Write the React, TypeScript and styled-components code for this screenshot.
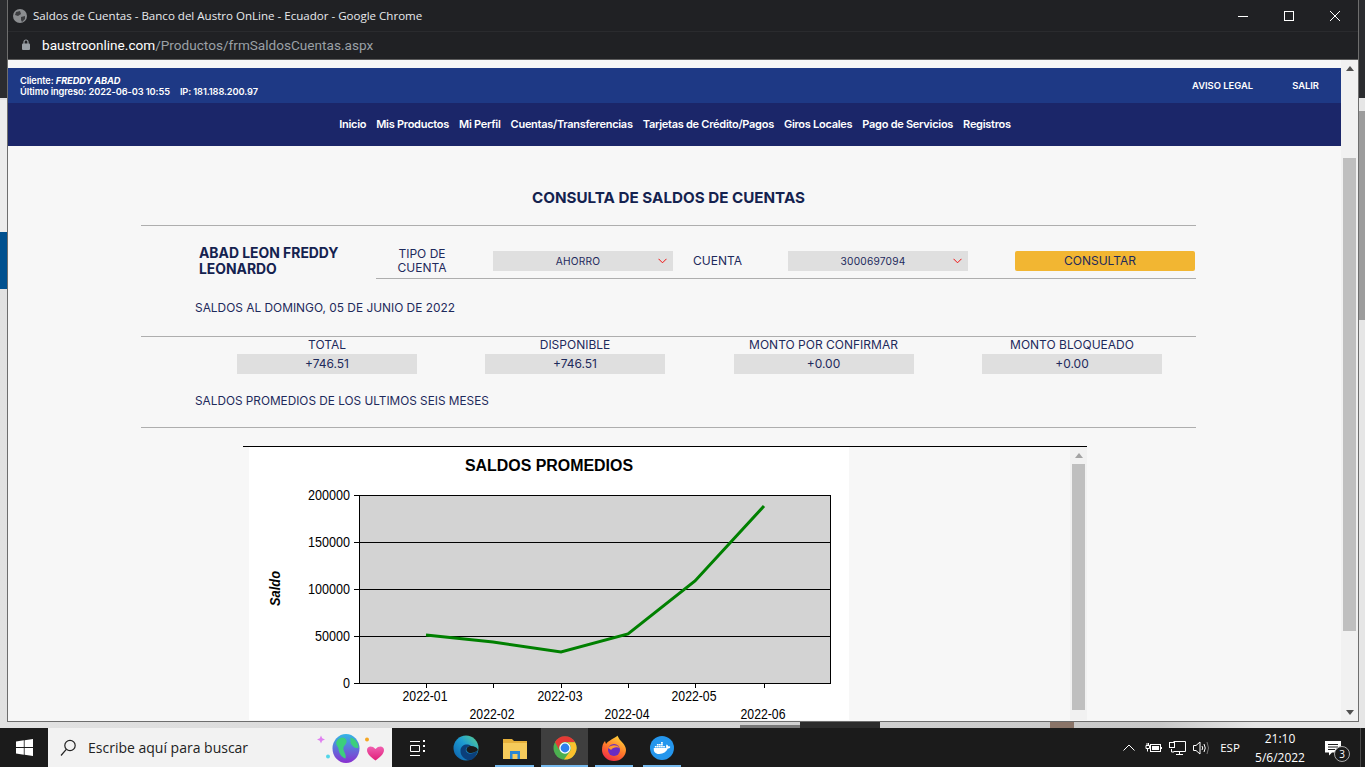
import React from "react";
import styled, { createGlobalStyle } from "styled-components";
import { FaDocker } from "react-icons/fa";

const GlobalStyle = createGlobalStyle`
  html, body { margin: 0; padding: 0; width: 1365px; height: 767px; overflow: hidden; }
  * { box-sizing: border-box; }
`;

const Desktop = styled.div`
  width: 1365px;
  height: 767px;
  display: flex;
  flex-direction: column;
  font-family: Inter, "Liberation Sans", sans-serif;
  background-color: #dcdcdc;
  background-image:
    linear-gradient(#2b2c2f, #2b2c2f),
    linear-gradient(#2b2c2f, #2b2c2f),
    linear-gradient(#00508f, #00508f),
    linear-gradient(#ececec, #ececec),
    linear-gradient(#9c9c9c, #9c9c9c),
    linear-gradient(#8a7468, #8a7468),
    linear-gradient(#2c2c2c, #2c2c2c),
    linear-gradient(#777777, #777777),
    linear-gradient(90deg, #e2e2e2, #d4d4d4 50%, #c8c8c8 85%, #e6e6e6 92%);
  background-size: 8px 98px, 8px 98px, 8px 57px, 8px 132px, 7px 209px, 24px 8px, 80px 6px, 60px 3px, 100% 100%;
  background-position: 0 0, 1358px 0, 0 232px, 0 100px, 1358px 111px, 1050px 720px, 800px 722px, 740px 725px, 0 0;
  background-repeat: no-repeat;
`;

const DesktopArea = styled.div`
  flex: 1;
  min-height: 0;
  padding: 0 7px 7px 8px;
  display: flex;
`;

const Window = styled.div`
  flex: 1;
  min-width: 0;
  display: flex;
  flex-direction: column;
  box-shadow: 0 0 0 1px #6e6e6e;
`;

const TitleBar = styled.div`
  height: 31px;
  background: #202124;
  display: flex;
  align-items: center;
  padding-left: 5px;
  color: #e8eaed;
  font-family: "Open Sans", sans-serif;
  font-size: 11.55px;
`;

const TitleText = styled.span`
  margin-left: 6px;
  flex: 1;
  white-space: nowrap;
`;

const WindowButton = styled.div`
  width: 46px;
  height: 31px;
  display: flex;
  align-items: center;
  justify-content: center;
`;

const AddressBar = styled.div`
  height: 29px;
  background: #202124;
  border-top: 1px solid #2a2b2e;
  border-bottom: 1px solid #5c5c5c;
  display: flex;
  align-items: center;
  padding: 0 0 2px 14px;
  font-family: Roboto, sans-serif;
  font-size: 13.6px;
  color: #9aa0a6;
`;

const Host = styled.span`
  color: #ffffff;
  margin-left: 12px;
`;

const Viewport = styled.div`
  flex: 1;
  min-height: 0;
  display: flex;
`;

const Page = styled.main`
  flex: 1;
  min-width: 0;
  overflow: hidden;
  background: #f7f7f7;
  padding-top: 8px;
  color: #1e2a5c;
`;

const InfoBar = styled.div`
  height: 35px;
  background: #1e3985;
  color: #fff;
  display: flex;
  align-items: center;
  padding-left: 12px;
  font-size: 9.25px;
  font-weight: 600;
  line-height: 11px;
`;

const ClientInfo = styled.div`
  flex: 1;
  letter-spacing: -0.1px;
  b { font-style: italic; font-weight: 700; }
`;

const IpLabel = styled.span`
  margin-left: 10px;
`;

const InfoLink = styled.a`
  font-size: 9.4px;
  font-weight: 600;
  margin-right: ${(p: { $gap: number }) => p.$gap}px;
`;

const NavBar = styled.nav`
  height: 43px;
  background: #1b2669;
  display: flex;
  justify-content: center;
  align-items: center;
  gap: 10px;
  padding-left: 1px;
  padding-bottom: 2px;
`;

const NavItem = styled.a`
  color: #fff;
  font-size: 11px;
  font-weight: 600;
  letter-spacing: -0.27px;
  white-space: nowrap;
`;

const Content = styled.div`
  width: 1055px;
  margin-left: 133px;
`;

const Heading = styled.h1`
  margin: 0;
  padding-top: 42px;
  height: 80px;
  border-bottom: 1px solid #aeaeae;
  text-align: center;
  font-size: 15.2px;
  line-height: 20px;
  font-weight: 700;
  color: #14224f;
`;

const QueryRow = styled.div`
  display: flex;
`;

const ClientName = styled.div`
  width: 235px;
  padding: 19px 0 0 58px;
  font-size: 13.9px;
  line-height: 16px;
  font-weight: 700;
  color: #14224f;
`;

const Fields = styled.div`
  flex: 1;
  display: flex;
  align-items: center;
  height: 53px;
  padding-top: 21px;
  padding-bottom: 3px;
  border-bottom: 1px solid #aeaeae;
`;

const FieldLabel = styled.div<{ $width: number; $gap: number; $center?: boolean }>`
  width: ${(p) => p.$width}px;
  margin-right: ${(p) => p.$gap}px;
  font-size: 12px;
  line-height: 14px;
  text-align: ${(p) => (p.$center ? "center" : "left")};
`;

const SelectBox = styled.div`
  width: 180px;
  height: 20px;
  background: #dfdfdf;
  display: flex;
  align-items: center;
  justify-content: center;
  position: relative;
  font-size: 10.2px;
  letter-spacing: 0.2px;
  padding-right: 10px;
`;

const Chevron = styled.svg`
  position: absolute;
  right: 6px;
  top: 7px;
`;

const FieldGap = styled.div<{ $w: number }>`
  width: ${(p) => p.$w}px;
`;

const ConsultButton = styled.button`
  width: 180px;
  height: 20px;
  border: 0;
  border-radius: 2px;
  background: #f2b632;
  color: #1e2a5c;
  font-family: inherit;
  font-size: 12px;
  padding: 0 10px 1px 0;
`;

const SectionText = styled.div`
  padding: 19px 0 18px 54px;
  font-size: 11.9px;
  line-height: 20px;
  height: 58px;
  border-bottom: 1px solid #aeaeae;
`;

const Balances = styled.div`
  display: grid;
  grid-template-columns: 248px 248px 249px 248px;
  padding-left: 62px;
`;

const BalanceCell = styled.div`
  display: flex;
  flex-direction: column;
  align-items: center;
`;

const BalanceLabel = styled.div`
  height: 17px;
  line-height: 16px;
  font-size: 12px;
  white-space: nowrap;
`;

const BalanceValue = styled.div`
  width: 180px;
  height: 20px;
  line-height: 20px;
  background: #dfdfdf;
  text-align: center;
  font-size: 12px;
`;

const AverageText = styled(SectionText)`
  height: 54px;
  padding: 17px 0 16px 54px;
  font-size: 11.8px;
`;

const ChartFrame = styled.div`
  width: 844px;
  height: 274px;
  margin: 18px 0 0 102px;
  border-top: 1px solid #000;
  display: flex;
  overflow: hidden;
`;

const ChartArea = styled.div`
  flex: 1;
  padding-left: 6px;
`;

const ChartSvg = styled.svg`
  display: block;
`;

const Scroll = styled.div`
  width: 17px;
  flex: none;
  background: #f1f1f1;
  display: flex;
  flex-direction: column;
  align-items: center;
`;

const ArrowBox = styled.div`
  height: 17px;
  flex: none;
  display: flex;
  align-items: center;
  justify-content: center;
`;

const ArrowUp = styled.div<{ $c: string }>`
  width: 0;
  height: 0;
  border-left: 4.5px solid transparent;
  border-right: 4.5px solid transparent;
  border-bottom: 5px solid ${(p) => p.$c};
`;

const ArrowDown = styled.div<{ $c: string }>`
  width: 0;
  height: 0;
  border-left: 4.5px solid transparent;
  border-right: 4.5px solid transparent;
  border-top: 5px solid ${(p) => p.$c};
`;

const Thumb = styled.div<{ $top: number; $h: number }>`
  width: 13px;
  height: ${(p) => p.$h}px;
  margin-top: ${(p) => p.$top}px;
  background: #bfbfbf;
  flex: none;
`;

const ScrollEnd = styled(ArrowBox)`
  margin-top: auto;
`;

const Taskbar = styled.footer`
  height: 39px;
  flex: none;
  background: #1b1b1b;
  display: flex;
  align-items: stretch;
  color: #fff;
  font-family: "Open Sans", sans-serif;
`;

const StartButton = styled.div`
  width: 48px;
  display: flex;
  align-items: center;
  justify-content: center;
`;

const SearchBox = styled.div`
  width: 344px;
  background: #f2f2f2;
  display: flex;
  align-items: center;
  padding-left: 12px;
  color: #222;
  font-size: 14px;
`;

const SearchText = styled.span`
  margin-left: 12px;
  flex: 1;
`;

const TaskButton = styled.div<{ $w?: number; $active?: boolean; $open?: boolean }>`
  width: ${(p) => p.$w ?? 49}px;
  display: flex;
  align-items: center;
  justify-content: center;
  position: relative;
  background: ${(p) => (p.$active ? "#3f3f3f" : "transparent")};
  &::after {
    content: "";
    display: ${(p) => (p.$open ? "block" : "none")};
    position: absolute;
    left: ${(p) => (p.$active ? 0 : 5)}px;
    right: ${(p) => (p.$active ? 0 : 5)}px;
    bottom: 0;
    height: 2px;
    background: #76b9ed;
  }
`;

const TaskSep = styled.div`
  width: 2px;
`;

const Tray = styled.div`
  margin-left: auto;
  display: flex;
  align-items: stretch;
`;

const TrayIcon = styled.div`
  width: 24px;
  display: flex;
  align-items: center;
  justify-content: center;
`;

const Lang = styled.div`
  width: 34px;
  display: flex;
  align-items: center;
  justify-content: center;
  font-size: 11.5px;
`;

const Clock = styled.div`
  width: 66px;
  display: flex;
  flex-direction: column;
  justify-content: center;
  align-items: center;
  font-size: 12px;
  line-height: 19px;
`;

const Notify = styled.div`
  width: 40px;
  display: flex;
  align-items: center;
  justify-content: center;
  position: relative;
`;

const NotifyBadge = styled.span`
  position: absolute;
  left: 21px;
  top: 18px;
  width: 16px;
  height: 16px;
  border-radius: 50%;
  border: 1px solid #aaa;
  background: #1b1b1b;
  font-size: 10px;
  line-height: 14px;
  text-align: center;
`;

const ShowDesktop = styled.div`
  width: 12px;
  padding-left: 7px;
  &::after {
    content: "";
    display: block;
    width: 1px;
    height: 100%;
    background: #4a4a4a;
  }
`;

const navItems = ["Inicio", "Mis Productos", "Mi Perfil", "Cuentas/Transferencias", "Tarjetas de Crédito/Pagos", "Giros Locales", "Pago de Servicios", "Registros"];
const balances = [
  ["TOTAL", "+746.51"],
  ["DISPONIBLE", "+746.51"],
  ["MONTO POR CONFIRMAR", "+0.00"],
  ["MONTO BLOQUEADO", "+0.00"],
];

const RedChevron = () => (
  <Chevron width="9" height="6" viewBox="0 0 9 6">
    <path d="M0.5 0.8 L4.5 4.8 L8.5 0.8" fill="none" stroke="#f01010" strokeWidth="1" />
  </Chevron>
);

const Chart = () => {
  const ys: [number, string][] = [[495, "200000"], [542, "150000"], [589, "100000"], [636, "50000"], [683, "0"]];
  const xs: [number, string, number][] = [[426, "2022-01", 700.5], [493, "2022-02", 719], [561, "2022-03", 700.5], [628, "2022-04", 719], [695, "2022-05", 700.5], [764, "2022-06", 719]];
  return (
    <ChartSvg width="600" height="273" viewBox="249 447 600 273">
      <rect x="249" y="447" width="600" height="273" fill="#fff" />
      <text x="549" y="471" textAnchor="middle" fontFamily="Liberation Sans" fontSize="16" fontWeight="700" fill="#000" textLength="168" lengthAdjust="spacingAndGlyphs">SALDOS PROMEDIOS</text>
      <rect x="359.5" y="495.5" width="471" height="188" fill="#d3d3d3" stroke="#000" />
      {ys.map(([y, l]) => (
        <g key={l}>
          <line x1="354" x2={y === 495 || y === 683 ? 360 : 831} y1={y + 0.5} y2={y + 0.5} stroke="#000" />
          <text x="350" y={y + 5} textAnchor="end" fontFamily="Liberation Sans" fontSize="14" fill="#000" textLength={l.length * 7} lengthAdjust="spacingAndGlyphs">{l}</text>
        </g>
      ))}
      {xs.map(([x, l, ty]) => (
        <g key={l}>
          <line x1={x + 0.5} x2={x + 0.5} y1="684" y2="688" stroke="#000" />
          <text x={x - 1} y={ty} textAnchor="middle" fontFamily="Liberation Sans" fontSize="14" fill="#000" textLength="45" lengthAdjust="spacingAndGlyphs">{l}</text>
        </g>
      ))}
      <polyline points="426,635 493,642 561,652 628,634 695,581 764,506" fill="none" stroke="#008000" strokeWidth="3" />
      <text transform="translate(279.5 588.500) rotate(-90)" textAnchor="middle" fontFamily="Liberation Sans" fontSize="14" fontWeight="700" fontStyle="italic" fill="#000" textLength="35" lengthAdjust="spacingAndGlyphs">Saldo</text>
    </ChartSvg>
  );
};

export default function App() {
  return (
    <Desktop>
      <GlobalStyle />
      <DesktopArea>
        <Window>
          <TitleBar>
            <svg width="14" height="14" viewBox="0 0 14 14">
              <circle cx="7" cy="7" r="7" fill="#8b8d90" />
              <path d="M3 3 L7 2 L8 5 L5 7 L2 6 Z M8 8 L12 7 L12 10 L9 13 L8 11 Z" fill="#3c3d40" />
            </svg>
            <TitleText>Saldos de Cuentas - Banco del Austro OnLine - Ecuador - Google Chrome</TitleText>
            <WindowButton>
              <svg width="12" height="12" viewBox="0 0 12 12"><path d="M1 6.5 H11" stroke="#fff" /></svg>
            </WindowButton>
            <WindowButton>
              <svg width="12" height="12" viewBox="0 0 12 12"><rect x="1.5" y="1.5" width="9" height="9" fill="none" stroke="#fff" /></svg>
            </WindowButton>
            <WindowButton>
              <svg width="12" height="12" viewBox="0 0 12 12"><path d="M1 1 L11 11 M11 1 L1 11" stroke="#fff" /></svg>
            </WindowButton>
          </TitleBar>
          <AddressBar>
            <svg width="8" height="11" viewBox="0 0 8 11">
              <path d="M2 5 V3 a2 2 0 0 1 4 0 V5" fill="none" stroke="#9aa0a6" strokeWidth="1.2" />
              <rect x="0" y="4.5" width="8" height="6.5" rx="1" fill="#9aa0a6" />
            </svg>
            <Host>baustroonline.com</Host>
            <span>/Productos/frmSaldosCuentas.aspx</span>
          </AddressBar>
          <Viewport>
            <Page>
              <InfoBar>
                <ClientInfo>
                  Cliente: <b>FREDDY ABAD</b>
                  <br />
                  Último ingreso: 2022-06-03 10:55<IpLabel>IP: 181.188.200.97</IpLabel>
                </ClientInfo>
                <InfoLink $gap={39}>AVISO LEGAL</InfoLink>
                <InfoLink $gap={22}>SALIR</InfoLink>
              </InfoBar>
              <NavBar>
                {navItems.map((n) => (
                  <NavItem key={n}>{n}</NavItem>
                ))}
              </NavBar>
              <Content>
                <Heading>CONSULTA DE SALDOS DE CUENTAS</Heading>
                <QueryRow>
                  <ClientName>
                    ABAD LEON FREDDY
                    <br />
                    LEONARDO
                  </ClientName>
                  <Fields>
                    <FieldLabel $width={92} $gap={25} $center>
                      TIPO DE
                      <br />
                      CUENTA
                    </FieldLabel>
                    <SelectBox>
                      AHORRO
                      <RedChevron />
                    </SelectBox>
                    <FieldGap $w={20} />
                    <FieldLabel $width={95} $gap={0}>CUENTA</FieldLabel>
                    <SelectBox>
                      3000697094
                      <RedChevron />
                    </SelectBox>
                    <FieldGap $w={47} />
                    <ConsultButton>CONSULTAR</ConsultButton>
                  </Fields>
                </QueryRow>
                <SectionText>SALDOS AL DOMINGO, 05 DE JUNIO DE 2022</SectionText>
                <Balances>
                  {balances.map(([l, v]) => (
                    <BalanceCell key={l}>
                      <BalanceLabel>{l}</BalanceLabel>
                      <BalanceValue>{v}</BalanceValue>
                    </BalanceCell>
                  ))}
                </Balances>
                <AverageText>SALDOS PROMEDIOS DE LOS ULTIMOS SEIS MESES</AverageText>
                <ChartFrame>
                  <ChartArea>
                    <Chart />
                  </ChartArea>
                  <Scroll>
                    <ArrowBox><ArrowUp $c="#a3a3a3" /></ArrowBox>
                    <Thumb $top={0} $h={246} />
                  </Scroll>
                </ChartFrame>
              </Content>
            </Page>
            <Scroll>
              <ArrowBox><ArrowUp $c="#505050" /></ArrowBox>
              <Thumb $top={81} $h={473} />
              <ScrollEnd><ArrowDown $c="#505050" /></ScrollEnd>
            </Scroll>
          </Viewport>
        </Window>
      </DesktopArea>
      <Taskbar>
        <StartButton>
          <svg width="17" height="17" viewBox="0 0 17 17" fill="#fff">
            <path d="M0 2.4 L7.8 1.3 V8 H0 Z M8.6 1.2 L17 0 V8 H8.6 Z M0 9 H7.8 V15.7 L0 14.6 Z M8.6 9 H17 V17 L8.6 15.8 Z" />
          </svg>
        </StartButton>
        <SearchBox>
          <svg width="16" height="18" viewBox="0 0 16 18" fill="none" stroke="#222" strokeWidth="1.2">
            <circle cx="10" cy="6.5" r="5.2" />
            <path d="M6.3 10.3 L1 16.5" />
          </svg>
          <SearchText>Escribe aquí para buscar</SearchText>
          <svg width="75" height="30" viewBox="0 0 75 30">
            <defs>
              <linearGradient id="globe" x1="0" y1="0" x2="0" y2="1">
                <stop offset="0" stopColor="#33b5e5" />
                <stop offset="1" stopColor="#8a2fd0" />
              </linearGradient>
              <linearGradient id="heart" x1="0" y1="0" x2="0" y2="1">
                <stop offset="0" stopColor="#f060b0" />
                <stop offset="1" stopColor="#e01e78" />
              </linearGradient>
            </defs>
            <path d="M4 2.5 L5.200 5.300 L8 6.500 L5.200 7.700 L4 10.500 L2.800 7.700 L0 6.500 L2.800 5.300 Z" fill="#e080f0" />
            <circle cx="11" cy="23.5" r="2" fill="#52d6e8" />
            <ellipse cx="29" cy="15.500" rx="13.500" ry="14.500" fill="url(#globe)" />
            <path d="M19.500 8.500 C23.500 2.500 28.500 4.500 29.500 7.500 C30.500 11.500 25.500 12.500 26.500 16.500 C27.500 20.500 29.500 21.500 28.500 25.500 C24.500 24.500 21.500 19.500 21.500 15.500 C20.500 12.500 18.500 11.500 19.500 8.500 Z M33.500 4.500 C38.500 5.500 41.500 10.500 41.500 14.500 C38.500 16.500 34.500 12.500 33.500 9.500 Z" fill="#3ccf7c" />
            <circle cx="50" cy="6.500" r="2" fill="#f5a623" />
            <path d="M58.500 27.500 C54 24 50 21 50 17 C50 13 55 12 58.500 16 C62 12 67 13 67 17 C67 21 63 24 58.500 27.500 Z" fill="url(#heart)" />
          </svg>
        </SearchBox>
        <TaskButton>
          <svg width="16" height="16" viewBox="0 0 16 16" fill="none" stroke="#fff">
            <path d="M1 1.500 H11 M1.500 5.500 H10.500 V11.500 H1.500 Z M1 15.500 H11" />
            <path d="M14 1 H16 M14 6 H16 M14 11 H16" strokeWidth="2" />
          </svg>
        </TaskButton>
        <TaskButton>
          <svg width="26" height="26" viewBox="0 0 26 26">
            <defs>
              <linearGradient id="edge" x1="0" y1="1" x2="1" y2="0">
                <stop offset="0" stopColor="#0c5ca8" />
                <stop offset="0.55" stopColor="#1d9bd1" />
                <stop offset="1" stopColor="#5fd48c" />
              </linearGradient>
            </defs>
            <circle cx="13" cy="13" r="12.500" fill="url(#edge)" />
            <path d="M25 15 C21 19 15 20 13 16 C12 13 15 11 18 11 C14 8 8 10 7.500 15 C7 21 12 26 18 25 C21 24 24 20 25 15 Z" fill="#0b3f7a" />
            <path d="M25 15 C24 12 21 11 18 11 C15 11 13 13 13.500 15.500 C15 19 21 19 25 15 Z" fill="#1b1b1b" />
          </svg>
        </TaskButton>
        <TaskButton $open>
          <svg width="24" height="22" viewBox="0 0 24 22">
            <path d="M0 2 H9 L11 4 H24 V8 H0 Z" fill="#e6b03a" />
            <rect y="6" width="24" height="16" fill="#f6cb5b" />
            <path d="M7 22 V14 H17 V22 H14.500 V17 H9.500 V22 Z" fill="#2a86d4" />
          </svg>
        </TaskButton>
        <TaskSep />
        <TaskButton $w={47} $active $open>
          <svg width="24" height="24" viewBox="-12 -12 24 24">
            <circle r="11.500" fill="#4caf50" />
            <path d="M-10 -6 A11.500 11.500 0 0 1 10 -6 L0 -6 A6 6 0 0 0 -5.200 3 Z" fill="#e53935" />
            <path d="M10 -5.700 A11.500 11.500 0 0 1 -1 11.500 L5.200 3 A6 6 0 0 0 0 -6 Z" fill="#fbc02d" />
            <circle r="5.700" fill="#fff" />
            <circle r="4.400" fill="#2f80ed" />
          </svg>
        </TaskButton>
        <TaskSep />
        <TaskButton $w={48} $open>
          <svg width="24" height="26" viewBox="0 0 24 26">
            <defs>
              <linearGradient id="ffx" x1="0.7" y1="0" x2="0.2" y2="1">
                <stop offset="0" stopColor="#ffd83a" />
                <stop offset="0.5" stopColor="#ff7a2a" />
                <stop offset="1" stopColor="#f0244a" />
              </linearGradient>
            </defs>
            <path d="M12 3 C18 0 14 0 15 0 C17 3 17 4 19 6 C23 10 24 13 24 15 A12 11 0 0 1 0 15 C0 11 1 8 3 6 L4 9 C6 6 9 5 12 3 Z" fill="url(#ffx)" />
            <circle cx="12" cy="15" r="6" fill="#6a2bc4" />
            <path d="M6 13 C9 10 14 9 18 13 C15 11.500 11 12 9 15 C8 14 7 13 6 13 Z" fill="#ff9a2e" />
          </svg>
        </TaskButton>
        <TaskButton $w={48} $open>
          <svg width="24" height="24" viewBox="0 0 24 24">
            <circle cx="12" cy="12" r="12" fill="#2496ed" />
            <FaDocker x="3.500" y="3.500" size={17} color="#fff" />
          </svg>
        </TaskButton>
        <Tray>
          <TrayIcon>
            <svg width="12" height="7" viewBox="0 0 12 7" fill="none" stroke="#fff"><path d="M0.500 6.500 L6 1 L11.500 6.500" /></svg>
          </TrayIcon>
          <TrayIcon>
            <svg width="17" height="12" viewBox="0 0 17 12" fill="none" stroke="#fff">
              <rect x="5.500" y="2.500" width="10" height="7" />
              <rect x="7" y="4" width="7" height="4" fill="#fff" stroke="none" />
              <path d="M16.500 5 V7" />
              <path d="M1 3.500 H4.500 V6.500 H1 Z M2 3 V1 M3.500 3 V1 M2.500 6.500 V9.500" />
            </svg>
          </TrayIcon>
          <TrayIcon>
            <svg width="17" height="14" viewBox="0 0 17 14" fill="none" stroke="#fff">
              <path d="M4.500 0.500 H16.500 V10.500 H4.500 M10.500 10.500 V13 M7 13.500 H14" />
              <rect x="0.500" y="1.500" width="5" height="5" fill="#1b1b1b" />
              <path d="M2.500 8 V11 H5" />
            </svg>
          </TrayIcon>
          <TrayIcon>
            <svg width="17" height="14" viewBox="0 0 17 14" fill="none" stroke="#fff">
              <path d="M0.500 4.500 H3 L7 1 V13 L3 9.500 H0.500 Z" />
              <path d="M9 5 Q10.500 7 9 9 M11 3 Q13.500 7 11 11" />
              <path d="M14 1 Q17 7 14 13" stroke="#777" />
            </svg>
          </TrayIcon>
          <Lang>ESP</Lang>
          <Clock>
            <span>21:10</span>
            <span>5/6/2022</span>
          </Clock>
          <Notify>
            <svg width="16" height="16" viewBox="0 0 16 16">
              <path d="M0 1 H16 V12.500 H7 L4 15.500 V12.500 H0 Z" fill="#fff" />
              <path d="M3 4.500 H13 M3 7 H13 M3 9.500 H10" stroke="#1b1b1b" />
            </svg>
            <NotifyBadge>3</NotifyBadge>
          </Notify>
          <ShowDesktop />
        </Tray>
      </Taskbar>
    </Desktop>
  );
}
